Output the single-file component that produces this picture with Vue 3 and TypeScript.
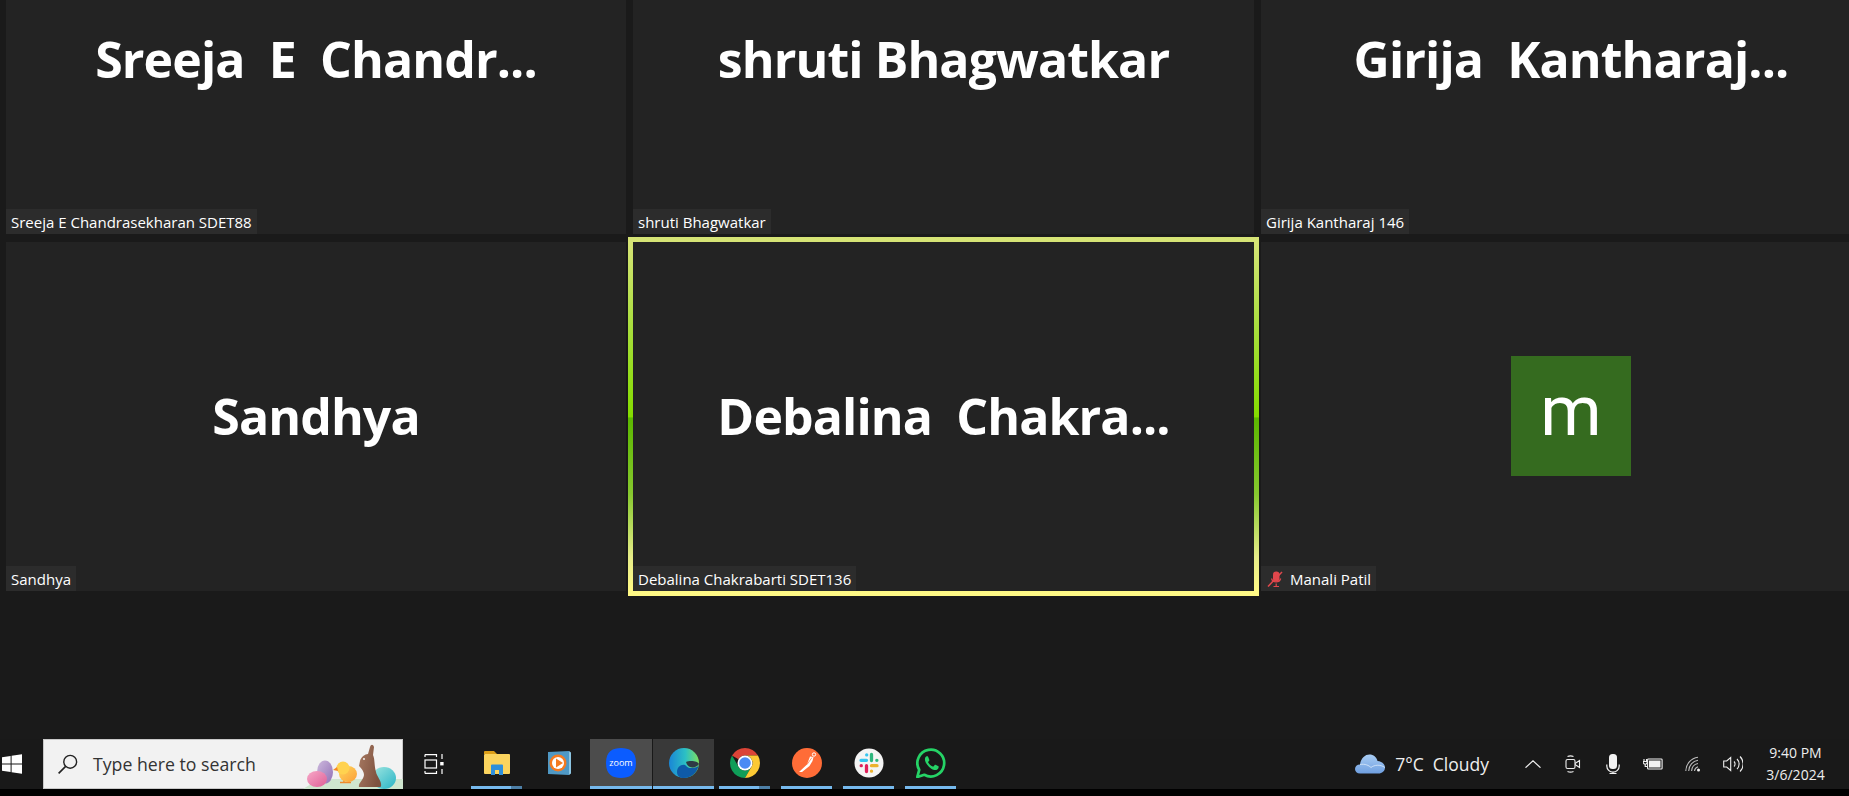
<template>
  <div class="desktop">
    <main class="meeting">
      <div class="gallery">
        <div v-for="p in participants" :key="p.label" class="tile" :class="{ 'tile--speaking': p.speaking }">
          <div v-if="p.initial" class="avatar">{{ p.initial }}</div>
          <div v-else class="tile-name">{{ p.name }}</div>
          <div class="tile-label">
            <svg v-if="p.muted" class="mute-icon" viewBox="0 0 16 16" width="16" height="16">
              <rect x="6" y="0.5" width="6.5" height="10" rx="3.2" fill="#e0474c" />
              <path d="M4.5 7.5a4.8 4.8 0 0 0 9.2 0M9.2 12.5v3M6.5 15.5h5.5" fill="none" stroke="#e0474c" stroke-width="1.2" />
              <path d="M15 1 1 15.5" stroke="#e0474c" stroke-width="1.5" />
            </svg>
            {{ p.label }}
          </div>
        </div>
      </div>
    </main>

    <footer class="taskbar">
      <div class="start">
        <svg viewBox="0 0 20 20" width="20" height="20">
          <path d="M0 3.2 8.6 2v7.5H0ZM9.6 1.8 20 .3v9.2H9.6ZM0 10.5h8.6V18L0 16.8ZM9.6 10.5H20v9.2L9.6 18.2Z" fill="#fff" />
        </svg>
      </div>

      <div class="search">
        <svg class="search-icon" viewBox="0 0 20 20" width="20" height="20">
          <circle cx="12.2" cy="7.8" r="6.4" fill="none" stroke="#222" stroke-width="1.4" />
          <path d="M7.6 12.4 .6 19.4" stroke="#222" stroke-width="1.6" />
        </svg>
        <span>Type here to search</span>
        <svg class="search-art" viewBox="0 0 100 50" width="100" height="50">
          <defs>
            <linearGradient id="eggPink" x1="0" y1="0" x2="1" y2="1">
              <stop offset="0" stop-color="#f7a8c8" /><stop offset="1" stop-color="#de5f96" />
            </linearGradient>
            <linearGradient id="eggPurple" x1="0" y1="0" x2="1" y2="1">
              <stop offset="0" stop-color="#cdb9dd" /><stop offset="1" stop-color="#9270b5" />
            </linearGradient>
            <linearGradient id="eggTeal" x1="0" y1="0" x2="1" y2="1">
              <stop offset="0" stop-color="#9fe6e0" /><stop offset="1" stop-color="#28b4c6" />
            </linearGradient>
            <linearGradient id="chick" x1="0" y1="0" x2="1" y2="1">
              <stop offset="0" stop-color="#ffd75c" /><stop offset="1" stop-color="#fb9f38" />
            </linearGradient>
            <linearGradient id="bunny" x1="0" y1="0" x2="1" y2="0.4">
              <stop offset="0" stop-color="#a87a62" /><stop offset="1" stop-color="#7e5240" />
            </linearGradient>
          </defs>
          <path d="M0 50 16 40H100V50Z" fill="#cfe6cf" />
          <ellipse cx="22" cy="33" rx="8" ry="11.500" fill="url(#eggPurple)" />
          <ellipse cx="14" cy="40" rx="10" ry="8" fill="url(#eggPink)" />
          <ellipse cx="81" cy="39" rx="12" ry="11" fill="url(#eggTeal)" />
          <path d="M37 43.500h11M41 40v4M46 40v4" stroke="#ee8a2c" stroke-width="1.500" />
          <ellipse cx="45" cy="35" rx="9" ry="8" fill="url(#chick)" />
          <circle cx="40" cy="29" r="6.500" fill="#ffd24f" />
          <path d="M34 28 30 31 35 32Z" fill="#f58a25" />
          <path d="M56 48C55 44 60 42 61 36 61 32 58 29 56 27L57 22C58 18 62 15 65 15L67 8C68 5 70 5 71 8L70 16C72 20 71 26 73 33 74 38 79 42 78 47 78 48 77 48 76 48Z" fill="url(#bunny)" />
          <circle cx="61" cy="20" r="0.900" fill="#fff" />
        </svg>
      </div>

      <div class="task-view">
        <svg viewBox="0 0 20 20" width="20" height="20" fill="none" stroke="#fff" stroke-width="1.2">
          <path d="M1 .6h11.5V3M1 .6V3M1 19.4h11.5V17M1 19.4V17" />
          <rect x="1" y="6" width="11.5" height="8" />
          <path d="M18 0v5M18 15v5" />
          <rect x="16.2" y="8" width="3.4" height="3.4" fill="#fff" stroke="none" />
        </svg>
      </div>

      <div class="apps">
        <div class="app app--open app--stack">
          <svg viewBox="0 0 30 30" width="30" height="30">
            <path d="M2 4a1 1 0 0 1 1-1h9l3 3H2Z" fill="#dd9f18" />
            <rect x="2" y="6" width="26" height="20" rx="1" fill="#fbd45e" />
            <path d="M9 27V17.5a1 1 0 0 1 1-1h10a1 1 0 0 1 1 1V27h-4v-5h-4v5Z" fill="#2e8fdc" />
          </svg>
        </div>
        <div class="app">
          <svg viewBox="0 0 30 30" width="30" height="30">
            <path d="M4 4 25 3v24L4 26Z" fill="#4f98c4" />
            <path d="M25 3l2 1.5v21L25 27Z" fill="#8cc5e2" />
            <circle cx="14" cy="15" r="8.5" fill="#f47a20" />
            <circle cx="14" cy="15" r="6" fill="#fff" />
            <path d="M12 10.5v9l7-4.5Z" fill="#f47a20" />
          </svg>
        </div>
        <div class="app app--active">
          <svg viewBox="0 0 30 30" width="30" height="30">
            <path d="M15 0c8 0 15 3 15 15s-7 15-15 15S0 27 0 15 7 0 15 0Z" fill="#0b5cff" />
            <text x="15" y="18" text-anchor="middle" class="zoom-word">zoom</text>
          </svg>
        </div>
        <div class="app app--hover">
          <svg viewBox="0 0 30 30" width="30" height="30">
            <defs>
              <linearGradient id="edgeBase" x1="0" y1="0.3" x2="1" y2="0.3">
                <stop offset="0" stop-color="#1a86d6" /><stop offset="0.55" stop-color="#2cc0c4" /><stop offset="1" stop-color="#7ee060" />
              </linearGradient>
            </defs>
            <circle cx="15" cy="15" r="15" fill="url(#edgeBase)" />
            <path d="M30 17C28 25 22 30 15 30 11 30 8 28 8 24 8 19 12 16 16 17 18 18 18 20 22 20 26 20 29 19 30 17Z" fill="#0e5aa8" />
            <path d="M17 14C21 12 29 13 30 16 28 19 24 20 21 19 19 18 18 17 17 14Z" fill="#2f3a44" />
          </svg>
        </div>
        <div class="app app--open app--stack">
          <svg viewBox="0 0 30 30" width="30" height="30">
            <path d="M2.010 7.500A15 15 0 0 1 27.990 7.500H15A7.500 7.500 0 0 0 8.500 11.250Z" fill="#db4437" />
            <path d="M2.010 7.500A15 15 0 0 0 15 30L21.500 18.750A7.500 7.500 0 0 1 8.500 18.750Z" fill="#0f9d58" />
            <path d="M27.990 7.500H15A7.500 7.500 0 0 1 21.500 18.750L15 30A15 15 0 0 0 27.990 7.500Z" fill="#fcc934" />
            <circle cx="15" cy="15" r="7.500" fill="#fff" />
            <circle cx="15" cy="15" r="5.800" fill="#4a8af4" />
          </svg>
        </div>
        <div class="app app--open">
          <svg viewBox="0 0 30 30" width="30" height="30">
            <circle cx="15" cy="15" r="15" fill="#ff6c37" />
            <circle cx="22" cy="6.500" r="1.700" fill="none" stroke="#fff" stroke-width="1" />
            <path d="M7 24 15 16.500 18 8.500 21.500 9 20.500 13 17.500 18 10 24Z" fill="#fff" />
            <path d="M15 16.500 20 9.500" stroke="#ff6c37" stroke-width="0.700" />
          </svg>
        </div>
        <div class="app app--open">
          <svg viewBox="0 0 30 30" width="30" height="30" fill="none" stroke-width="3.300" stroke-linecap="round">
            <circle cx="15" cy="15" r="14.500" fill="#f4f4f4" />
            <path d="M7 12.300h5.500M12.700 6.800v.1" stroke="#36c5f0" />
            <path d="M17.500 6.500v6M22.800 12.300h.1" stroke="#2eb67d" />
            <path d="M17.500 17.700H23M17.500 23.200v-.1" stroke="#ecb22e" />
            <path d="M12.500 17.700v5.800M7.200 17.700h.1" stroke="#e01e5a" />
          </svg>
        </div>
        <div class="app app--open">
          <svg viewBox="0 0 30 30" width="30" height="30">
            <path d="M1.300 29 3.200 21.800A13.400 13.400 0 1 1 8.300 26.800Z" fill="none" stroke="#25d366" stroke-width="2.700" stroke-linejoin="round" />
            <path d="M10.700 8.200c-.6 0-1.800 1-1.800 3 0 2.300 1.600 4.500 2 5 .6.800 3 4.500 7.300 5.700 2 .5 3.800-.6 4.300-2 .2-.8.200-1.500 0-1.700l-3-1.500c-.4-.1-.6 0-.8.200l-1.200 1.500c-.2.200-.5.200-.8.100-2.200-1-3.700-2.600-4.500-4-.2-.3 0-.5.100-.7l1-1.300c.1-.2.100-.5 0-.7l-1.200-3c-.2-.5-.5-.6-.9-.6Z" fill="#25d366" />
          </svg>
        </div>
      </div>

      <div class="tray">
        <div class="weather">
          <svg viewBox="0 0 30 20" width="30" height="20">
            <defs>
              <linearGradient id="cloud" x1="0" y1="0" x2="0" y2="1">
                <stop offset="0" stop-color="#a9cdf4" /><stop offset="1" stop-color="#6f9fe0" />
              </linearGradient>
            </defs>
            <path d="M5 19.500C2 19.500 0 17.500 0 15s2-4.500 5-4.500C6 4 10 .5 14.500.5c4 0 7 2.500 8 6.500 4 .3 7.500 3 7.500 6.500 0 3.500-3 6-6.500 6Z" fill="url(#cloud)" />
            <path d="M5 10.500c5-1 9 1 11 3 3-2.500 9-3.500 14 0" fill="none" stroke="#dcebfb" stroke-width="0.800" />
          </svg>
          <span class="weather-text">7°C&nbsp; Cloudy</span>
        </div>
        <div class="tray-icon">
          <svg viewBox="0 0 16 8" width="16" height="8" fill="none" stroke="#eee" stroke-width="1.200"><path d="M.5 7.700 8 .8l7.500 6.900" /></svg>
        </div>
        <div class="tray-icon">
          <svg viewBox="0 0 16 20" width="16" height="20" fill="none" stroke="#eee" stroke-width="1.100">
            <rect x="1" y="5.500" width="9" height="9" rx="1.500" />
            <path d="M10 9.500 14.500 6.500v7L10 10.500" />
            <path d="M2.500 2.500a8 8 0 0 1 6 0M2.500 17.500a8 8 0 0 0 6 0" />
          </svg>
        </div>
        <div class="tray-icon">
          <svg viewBox="0 0 14 20" width="14" height="20" fill="none" stroke="#f2f2f2" stroke-width="1.200">
            <rect x="3" y="0" width="8" height="15" rx="3.500" fill="#f2f2f2" stroke="none" />
            <path d="M.8 10.500v1.500a6.200 6.200 0 0 0 12.400 0v-1.500M7 18v2M3.500 19.500h7" />
          </svg>
        </div>
        <div class="tray-icon">
          <svg viewBox="0 0 20 12" width="20" height="12" fill="none" stroke="#f2f2f2" stroke-width="1.100">
            <path d="M1 1v2.500M3.500 1v2.500M.3 3.500h3.900v1.200a2 2 0 0 1-3.900 0ZM2.200 6.500v2h2" />
            <rect x="4.600" y="1" width="14.500" height="10" rx="0.800" />
            <rect x="6" y="2.500" width="11.500" height="7" fill="#f2f2f2" stroke="none" />
          </svg>
        </div>
        <div class="tray-icon">
          <svg viewBox="0 0 16 16" width="16" height="16" fill="none" stroke="#bdbdbd" stroke-width="1.100">
            <path d="M.8 15A14 14 0 0 1 13 1.200M3.700 15A11 11 0 0 1 13 4.300M6.600 15A8 8 0 0 1 13 7.500M9.500 15A5 5 0 0 1 13 10.700" />
            <circle cx="13.500" cy="14" r="1.500" fill="#f2f2f2" stroke="none" />
          </svg>
        </div>
        <div class="tray-icon">
          <svg viewBox="0 0 20 18" width="20" height="18" fill="none" stroke="#eee" stroke-width="1.100">
            <path d="M.7 6h3l4-3.500v13L3.700 12h-3Z" />
            <path d="M11 6.500a3.500 3.500 0 0 1 0 5M14 4a7 7 0 0 1 0 10M17 1.500a10.500 10.500 0 0 1 0 15" />
          </svg>
        </div>
        <div class="clock">
          <div>9:40 PM</div>
          <div>3/6/2024</div>
        </div>
      </div>
    </footer>
    <div class="screen-edge"></div>
  </div>
</template>

<script setup lang="ts">
interface Participant {
  name: string
  label: string
  initial?: string
  muted?: boolean
  speaking?: boolean
}

const participants: Participant[] = [
  { name: 'Sreeja  E  Chandr...', label: 'Sreeja E Chandrasekharan SDET88' },
  { name: 'shruti Bhagwatkar', label: 'shruti Bhagwatkar' },
  { name: 'Girija  Kantharaj...', label: 'Girija Kantharaj 146' },
  { name: 'Sandhya', label: 'Sandhya' },
  { name: 'Debalina  Chakra...', label: 'Debalina Chakrabarti SDET136', speaking: true },
  { name: 'Manali Patil', label: 'Manali Patil', initial: 'm', muted: true },
]
</script>

<style scoped>
.desktop {
  width: 1849px;
  height: 796px;
  overflow: hidden;
  display: flex;
  flex-direction: column;
  background: #000;
  font-family: "Open Sans", "Noto Sans", sans-serif;
  color: #fff;
}

.meeting {
  height: 739px;
  flex: 0 0 auto;
  background: #1a1a1a;
  overflow: hidden;
}

.gallery {
  display: grid;
  grid-template-columns: 620px 621px 620px;
  grid-auto-rows: 349px;
  gap: 8px 7px;
  padding-left: 6px;
  margin-top: -115px;
}

.tile {
  position: relative;
  background: #232323;
  display: flex;
  align-items: center;
  justify-content: center;
}

.tile--speaking::after {
  content: "";
  position: absolute;
  inset: -5px;
  border: 5px solid;
  border-image: linear-gradient(180deg, #d6e476 0%, #a8de3c 25%, #84dc00 50%, #5cb800 50.5%, #86c82e 72%, #e6ec88 90%, #fff985 100%) 1;
  pointer-events: none;
}

.tile-name {
  font-size: 50px;
  font-weight: 700;
  white-space: pre;
  letter-spacing: -0.9px;
  line-height: 1;
  padding-bottom: 2px;
}

.avatar {
  width: 120px;
  height: 120px;
  margin-bottom: 1px;
  background: #356b1f;
  display: flex;
  align-items: center;
  justify-content: center;
  font-family: Roboto, "Open Sans", sans-serif;
  font-size: 70px;
  font-weight: 400;
  line-height: 1;
  padding-bottom: 10px;
  box-sizing: border-box;
}

.tile-label {
  position: absolute;
  left: 0;
  bottom: 0;
  height: 25px;
  padding: 0 5px;
  display: flex;
  align-items: center;
  gap: 7px;
  background: #2c2c2c;
  font-size: 15px;
  white-space: nowrap;
}

.mute-icon {
  margin-left: 1px;
}

.taskbar {
  height: 50px;
  flex: 0 0 auto;
  display: flex;
  align-items: stretch;
  background: #191919;
}

.start {
  width: 43px;
  padding-left: 2px;
  box-sizing: border-box;
  display: flex;
  align-items: center;
}

.search {
  position: relative;
  width: 360px;
  display: flex;
  align-items: center;
  gap: 15px;
  padding-left: 14px;
  box-sizing: border-box;
  background: #f2f2f2;
  border: 1px solid #c9c9c9;
  color: #333;
  font-size: 17.700px;
}

.search-art {
  position: absolute;
  right: -1px;
  bottom: -1px;
}

.task-view {
  width: 63px;
  padding-right: 1px;
  box-sizing: border-box;
  display: flex;
  align-items: center;
  justify-content: center;
}

.apps {
  display: flex;
}

.app {
  position: relative;
  width: 62px;
  display: flex;
  align-items: center;
  justify-content: center;
  padding-bottom: 2px;
  box-sizing: border-box;
}

.app--open::after,
.app--active::after,
.app--hover::after {
  content: "";
  position: absolute;
  bottom: 0;
  height: 3px;
  background: #76b9ed;
}

.app--open::after {
  left: 5px;
  right: 6px;
}

.app--stack::after {
  right: 6px;
  background: linear-gradient(90deg, #76b9ed 78%, #4d7fa6 78%);
}

.app--active {
  background: #4c4c4c;
}

.app--hover {
  background: #393939;
  margin-left: 1px;
  width: 61px;
}

.app--active::after,
.app--hover::after {
  left: 0;
  right: 0;
}

.zoom-word {
  fill: #fff;
  font-size: 9px;
  font-family: "Open Sans", sans-serif;
}

.tray {
  margin-left: auto;
  display: flex;
  align-items: center;
  padding-right: 11px;
}

.weather {
  display: flex;
  align-items: center;
  gap: 10px;
  margin-right: 24px;
}

.weather-text {
  font-size: 17.500px;
  color: #eee;
}

.tray-icon {
  width: 40px;
  display: flex;
  align-items: center;
  justify-content: center;
}

.clock {
  width: 85px;
  text-align: center;
  font-size: 14px;
  line-height: 22px;
  color: #eee;
}

.screen-edge {
  flex: 1;
  background: #000;
}
</style>

<style>
html,
body {
  margin: 0;
  overflow: hidden;
}
</style>
